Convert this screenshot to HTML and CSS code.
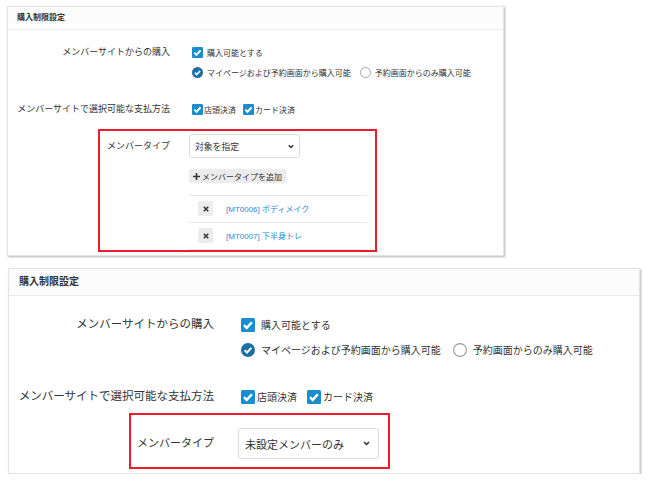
FILE: index.html
```html
<!DOCTYPE html>
<html lang="ja">

<head>
  <meta charset="UTF-8">
  <title>購入制限設定</title>
  <link rel="stylesheet" href="styles.css">
</head>

<body>
  <svg class="defs" width="0" height="0" aria-hidden="true">
    <symbol id="ic-check" viewBox="0 0 14 14">
      <rect width="14" height="14" rx="1.5" fill="#1a8dd0" />
      <path d="M3 7.2l2.7 2.7 5.2-5.7" fill="none" stroke="#fff" stroke-width="2.4" />
    </symbol>
    <symbol id="ic-radio-on" viewBox="0 0 14 14">
      <circle cx="7" cy="7" r="7" fill="#1b6ea8" />
      <path d="M3.7 7.2l2.3 2.3 4.3-4.6" fill="none" stroke="#fff" stroke-width="2.1" />
    </symbol>
    <symbol id="ic-radio-off" viewBox="0 0 14 14">
      <circle cx="7" cy="7" r="6.4" fill="#fff" stroke="#9a9a9a" stroke-width="1.1" />
    </symbol>
    <symbol id="ic-chev" viewBox="0 0 8 6">
      <path d="M1 1.2l3 3 3-3" fill="none" stroke="#333" stroke-width="1.9" />
    </symbol>
    <symbol id="ic-x" viewBox="0 0 8 8">
      <path d="M1 1l6 6M7 1L1 7" fill="none" stroke="#333" stroke-width="2" />
    </symbol>
    <symbol id="ic-plus" viewBox="0 0 8 8">
      <path d="M4 0v8M0 4h8" fill="none" stroke="#333" stroke-width="1.8" />
    </symbol>
  </svg>

  <div class="page">

    <!-- 対象を指定 -->
    <section class="card card-sm">
      <div class="card-head">購入制限設定</div>
      <div class="card-body">
        <div class="row">
          <div class="row-label">メンバーサイトからの購入</div>
          <div class="row-field">
            <div class="opt">
              <span class="item"><svg class="ic"><use href="#ic-check" /></svg>購入可能とする</span>
            </div>
            <div class="opt">
              <span class="item"><svg class="ic"><use href="#ic-radio-on" /></svg>マイページおよび予約画面から購入可能</span>
              <span class="item"><svg class="ic"><use href="#ic-radio-off" /></svg>予約画面からのみ購入可能</span>
            </div>
          </div>
        </div>

        <div class="row row-pay">
          <div class="row-label">メンバーサイトで選択可能な支払方法</div>
          <div class="row-field">
            <div class="opt opt-tight">
              <span class="item"><svg class="ic"><use href="#ic-check" /></svg>店頭決済</span>
              <span class="item"><svg class="ic"><use href="#ic-check" /></svg>カード決済</span>
            </div>
          </div>
        </div>

        <div class="hl">
          <div class="row">
            <div class="row-label">メンバータイプ</div>
            <div class="row-field">
              <div class="select">対象を指定<svg class="chev"><use href="#ic-chev" /></svg></div>
              <div class="add-btn"><svg class="plus"><use href="#ic-plus" /></svg>メンバータイプを追加</div>
              <div class="types">
                <div class="type-row">
                  <span class="del"><svg><use href="#ic-x" /></svg></span>
                  <span class="link">[MT0006] ボディメイク</span>
                </div>
                <div class="type-row">
                  <span class="del"><svg><use href="#ic-x" /></svg></span>
                  <span class="link">[MT0007] 下半身トレ</span>
                </div>
              </div>
            </div>
          </div>
        </div>
      </div>
    </section>

    <!-- 未設定メンバーのみ -->
    <section class="card card-lg">
      <div class="card-head">購入制限設定</div>
      <div class="card-body">
        <div class="row">
          <div class="row-label">メンバーサイトからの購入</div>
          <div class="row-field">
            <div class="opt">
              <span class="item"><svg class="ic"><use href="#ic-check" /></svg>購入可能とする</span>
            </div>
            <div class="opt">
              <span class="item"><svg class="ic"><use href="#ic-radio-on" /></svg>マイページおよび予約画面から購入可能</span>
              <span class="item"><svg class="ic"><use href="#ic-radio-off" /></svg>予約画面からのみ購入可能</span>
            </div>
          </div>
        </div>

        <div class="row row-pay">
          <div class="row-label">メンバーサイトで選択可能な支払方法</div>
          <div class="row-field">
            <div class="opt opt-tight">
              <span class="item"><svg class="ic"><use href="#ic-check" /></svg>店頭決済</span>
              <span class="item"><svg class="ic"><use href="#ic-check" /></svg>カード決済</span>
            </div>
          </div>
        </div>

        <div class="hl">
          <div class="row">
            <div class="row-label">メンバータイプ</div>
            <div class="row-field">
              <div class="select">未設定メンバーのみ<svg class="chev"><use href="#ic-chev" /></svg></div>
            </div>
          </div>
        </div>
      </div>
    </section>

  </div>
</body>

</html>
```

FILE: styles.css
```css
body {
  margin: 0;
  background: #fff;
  font-family: "Liberation Sans", "Noto Sans CJK JP", sans-serif;
  color: #333;
}

.defs {
  position: absolute;
  width: 0;
  height: 0;
}

.page {
  display: flex;
  flex-direction: column;
  align-items: flex-start;
}

/* card */

.card {
  box-sizing: border-box;
  background: #fff;
  border: 1px solid #e4e4e4;
  box-shadow: 1px 1px 2px rgba(0, 0, 0, 0.3);
  overflow: hidden;
}

.card-head {
  background: #fcfcfc;
  border-bottom: 1px solid #ececec;
  font-weight: bold;
}

.row {
  display: grid;
  align-items: start;
}

.row-label {
  text-align: right;
  white-space: nowrap;
}

.opt {
  display: flex;
  align-items: center;
  white-space: nowrap;
}

.item {
  display: flex;
  align-items: center;
}

.ic {
  flex: none;
}

.hl {
  box-sizing: border-box;
  border: 2px solid #ec1c2a;
}

.select {
  box-sizing: border-box;
  display: flex;
  align-items: center;
  justify-content: space-between;
  background: #fff;
  border: 1px solid #dcdcdc;
  border-radius: 3px;
  white-space: nowrap;
}

.add-btn {
  display: inline-flex;
  align-items: center;
  background: #ececec;
  border-radius: 2px;
  white-space: nowrap;
}

.types {
  border-bottom: 1px solid #e8e8e8;
}

.type-row {
  display: flex;
  align-items: center;
  border-top: 1px solid #e8e8e8;
}

.del {
  display: flex;
  align-items: center;
  justify-content: center;
  background: #ececec;
  border-radius: 2px;
}

.link {
  color: #2b8ad2;
  white-space: nowrap;
}

/* small card */

.card-sm {
  width: 497px;
  height: 250px;
  margin: 6px 0 0 7px;
}

.card-sm .card-head {
  height: 22px;
  line-height: 22px;
  padding-left: 9px;
  font-size: 8px;
}

.card-sm .card-body {
  padding-top: 12px;
}

.card-sm .row {
  grid-template-columns: 162px 1fr;
  column-gap: 19px;
}

.card-sm .row-label {
  font-size: 9px;
  line-height: 20px;
}

.card-sm .opt {
  height: 20px;
  padding-left: 3px;
  gap: 9px;
  font-size: 8px;
}

.card-sm .item {
  gap: 4px;
}

.card-sm .opt-tight {
  gap: 7px;
}

.card-sm .opt-tight .item {
  gap: 1px;
}

.card-sm .ic {
  width: 11px;
  height: 11px;
}

.card-sm .row-pay {
  margin-top: 17px;
}

.card-sm .hl {
  width: 279px;
  height: 123px;
  margin: 10px 0 0 90px;
  padding-top: 3px;
}

.card-sm .hl .row {
  grid-template-columns: 70px 1fr;
  column-gap: 19px;
}

.card-sm .hl .row-label {
  line-height: 24px;
}

.card-sm .select {
  width: 111px;
  height: 24px;
  padding: 0 5px 0 5px;
  font-size: 8.8px;
}

.card-sm .chev {
  width: 6px;
  height: 5px;
}

.card-sm .add-btn {
  height: 14px;
  margin-top: 11px;
  padding: 0 4px;
  gap: 2px;
  font-size: 8px;
}

.card-sm .plus {
  width: 7px;
  height: 7px;
}

.card-sm .types {
  width: 178px;
  margin-top: 11px;
}

.card-sm .type-row {
  height: 26px;
  padding-left: 9px;
  gap: 13px;
  font-size: 8px;
}

.card-sm .del {
  width: 15px;
  height: 15px;
}

.card-sm .del svg {
  width: 6px;
  height: 6px;
}

/* large card */

.card-lg {
  width: 632px;
  height: 206px;
  margin: 12px 0 0 8px;
}

.card-lg .card-head {
  height: 26px;
  line-height: 26px;
  padding-left: 10px;
  font-size: 10px;
}

.card-lg .card-body {
  padding-top: 16px;
}

.card-lg .row {
  grid-template-columns: 205px 1fr;
  column-gap: 24px;
}

.card-lg .row-label {
  font-size: 11.5px;
  line-height: 25px;
}

.card-lg .opt {
  height: 25px;
  padding-left: 3px;
  gap: 12px;
  font-size: 10px;
}

.card-lg .item {
  gap: 6px;
}

.card-lg .opt-tight {
  gap: 10px;
}

.card-lg .opt-tight .item {
  gap: 2px;
}

.card-lg .ic {
  width: 14px;
  height: 14px;
}

.card-lg .row-pay {
  margin-top: 22px;
}

.card-lg .hl {
  width: 261px;
  height: 56px;
  margin: 4px 0 0 120px;
  padding-top: 13px;
}

.card-lg .hl .row {
  grid-template-columns: 83px 1fr;
  column-gap: 24px;
}

.card-lg .hl .row-label {
  font-size: 11px;
  line-height: 31px;
}

.card-lg .select {
  width: 141px;
  height: 31px;
  padding: 0 8px 0 6px;
  font-size: 11px;
}

.card-lg .chev {
  width: 7px;
  height: 5px;
}
```
